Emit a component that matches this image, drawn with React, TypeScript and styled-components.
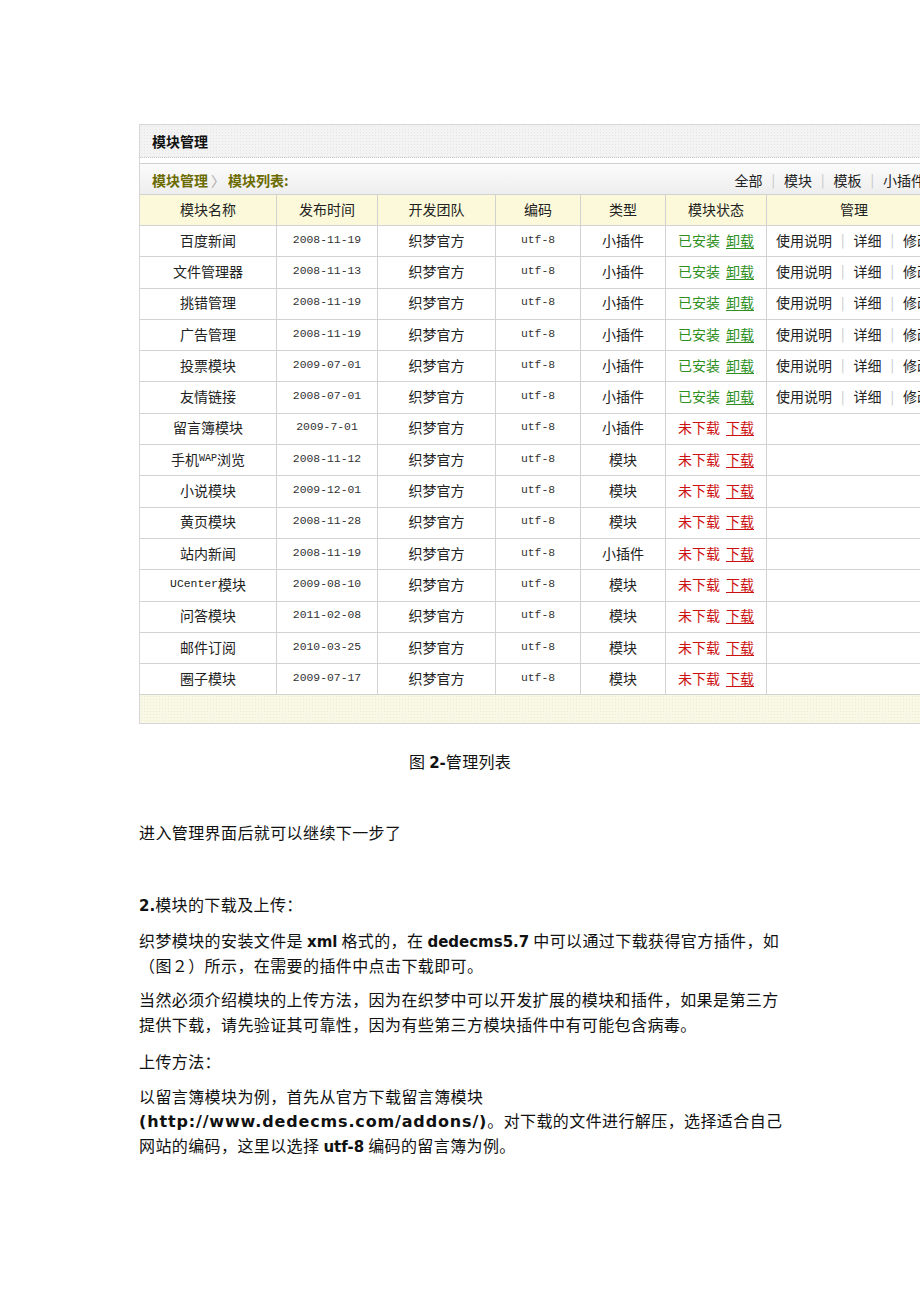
import styled, { createGlobalStyle } from 'styled-components';

const GlobalStyle = createGlobalStyle`
  html, body {
    margin: 0;
    padding: 0;
    background: #fff;
    overflow-x: hidden;
  }
  body {
    font-family: "Noto Sans CJK SC", "Noto Sans", sans-serif;
    color: #111;
  }
`;

const columns = '137px 101px 118px 85px 85px 101px 1fr';

const Page = styled.div`
  width: 920px;
  min-height: 1302px;
  padding-top: 124px;
  box-sizing: border-box;
  overflow: hidden;
`;

const Panel = styled.div`
  margin-left: 139px;
  width: 801px;
  border: 1px solid #d6d6d6;
  border-right: none;
  font-size: 14px;
  color: #222;
`;

const TitleBar = styled.div`
  height: 33px;
  display: flex;
  align-items: center;
  padding-left: 12px;
  box-sizing: border-box;
  font-weight: bold;
  color: #111;
  background-color: #f3f3f3;
  background-image: radial-gradient(#e4e4e4 0.6px, transparent 0.8px);
  background-size: 3px 3px;
  border-bottom: 1px dotted #c8c8c8;
`;

const ListBox = styled.div`
  margin-top: 5px;
  border-top: 1px solid #cfcfcf;
`;

const Crumbs = styled.div`
  height: 31px;
  box-sizing: border-box;
  border-bottom: 1px solid #d2d2d2;
  display: flex;
  align-items: center;
  justify-content: space-between;
  padding: 1px 16px 0 12px;
  background: linear-gradient(#fbfbfb, #eeeeee);
`;

const CrumbPath = styled.div`
  font-weight: bold;
  color: #6b6b00;
`;

const CrumbArrow = styled.span`
  color: #aaa;
  font-weight: normal;
  margin: 0 3px;
`;

const FilterLinks = styled.div`
  color: #222;
  display: flex;
  align-items: center;
`;

const Sep = styled.span`
  color: #c4c4c4;
  margin: 0 9px;
  font-size: 13px;
`;

const HeadRow = styled.div`
  display: grid;
  grid-template-columns: ${columns};
  height: 31px;
  box-sizing: border-box;
  border-bottom: 1px solid #d2d2d2;
  background: #fbf9d9;
`;

const HeadCell = styled.div`
  display: flex;
  align-items: center;
  justify-content: center;
  padding-bottom: 2px;
  border-right: 1px solid #d2d2d2;
  color: #222;
  &:last-child {
    border-right: none;
  }
`;

const DataRow = styled.div`
  display: grid;
  grid-template-columns: ${columns};
  height: 31.3px;
  box-sizing: border-box;
  border-bottom: 1px solid #d2d2d2;
  background: #fff;
`;

const Cell = styled.div`
  display: flex;
  align-items: center;
  justify-content: center;
  padding-bottom: 3px;
  border-right: 1px solid #d2d2d2;
  color: #222;
  white-space: nowrap;
`;

const ManageCell = styled(Cell)`
  justify-content: flex-start;
  padding-left: 9px;
  border-right: none;
`;

const Mono = styled.span`
  font-family: "Liberation Mono", "DejaVu Sans Mono", monospace;
  font-size: 11.4px;
  color: #333;
`;

const SmallLatin = styled.span`
  font-family: "Liberation Mono", monospace;
  font-size: 10px;
`;

const MonoLatin = styled.span`
  font-family: "Liberation Mono", monospace;
  font-size: 11.4px;
`;

const Status = styled.span<{ $ok: boolean }>`
  color: ${(p) => (p.$ok ? '#2f8f1f' : '#cc1111')};
  display: flex;
  gap: 6px;
`;

const StatusLink = styled.span`
  text-decoration: underline;
  text-underline-offset: 2px;
`;

const FootRow = styled.div`
  height: 28px;
  background-color: #f9f8e6;
  background-image: radial-gradient(#ecead0 0.6px, transparent 0.8px);
  background-size: 3px 3px;
`;

const Caption = styled.div`
  margin-top: 25px;
  text-align: center;
  font-size: 16px;
  line-height: 24px;
  color: #111;
  letter-spacing: 0.3px;
`;

const Bold = styled.b`
  font-family: "DejaVu Sans", "Noto Sans CJK SC", sans-serif;
  font-weight: bold;
  font-size: 15px;
  line-height: 1;
  letter-spacing: 0;
`;

const Url = styled(Bold)`
  font-size: 16px;
  letter-spacing: 0.85px;
`;

const Article = styled.div`
  margin-left: 139px;
  width: 652px;
  font-size: 16px;
  line-height: 24.5px;
  letter-spacing: 0.4px;
  color: #111;
`;

const Para = styled.p<{ $gap: number }>`
  margin: ${(p) => p.$gap}px 0 0;
`;

type Module = {
  name: React.ReactNode;
  date: string;
  kind: string;
  installed: boolean;
};

const modules: Module[] = [
  { name: '百度新闻', date: '2008-11-19', kind: '小插件', installed: true },
  { name: '文件管理器', date: '2008-11-13', kind: '小插件', installed: true },
  { name: '挑错管理', date: '2008-11-19', kind: '小插件', installed: true },
  { name: '广告管理', date: '2008-11-19', kind: '小插件', installed: true },
  { name: '投票模块', date: '2009-07-01', kind: '小插件', installed: true },
  { name: '友情链接', date: '2008-07-01', kind: '小插件', installed: true },
  { name: '留言簿模块', date: '2009-7-01', kind: '小插件', installed: false },
  { name: <>手机<SmallLatin>WAP</SmallLatin>浏览</>, date: '2008-11-12', kind: '模块', installed: false },
  { name: '小说模块', date: '2009-12-01', kind: '模块', installed: false },
  { name: '黄页模块', date: '2008-11-28', kind: '模块', installed: false },
  { name: '站内新闻', date: '2008-11-19', kind: '小插件', installed: false },
  { name: <><MonoLatin>UCenter</MonoLatin>模块</>, date: '2009-08-10', kind: '模块', installed: false },
  { name: '问答模块', date: '2011-02-08', kind: '模块', installed: false },
  { name: '邮件订阅', date: '2010-03-25', kind: '模块', installed: false },
  { name: '圈子模块', date: '2009-07-17', kind: '模块', installed: false },
];

export default function App() {
  return (
    <>
      <GlobalStyle />
      <Page>
        <Panel>
          <TitleBar>模块管理</TitleBar>
          <ListBox>
            <Crumbs>
              <CrumbPath>
                模块管理<CrumbArrow>〉</CrumbArrow>模块列表:
              </CrumbPath>
              <FilterLinks>
                <span>全部</span><Sep>|</Sep>
                <span>模块</span><Sep>|</Sep>
                <span>模板</span><Sep>|</Sep>
                <span>小插件</span>
              </FilterLinks>
            </Crumbs>
            <HeadRow>
              <HeadCell>模块名称</HeadCell>
              <HeadCell>发布时间</HeadCell>
              <HeadCell>开发团队</HeadCell>
              <HeadCell>编码</HeadCell>
              <HeadCell>类型</HeadCell>
              <HeadCell>模块状态</HeadCell>
              <HeadCell>管理</HeadCell>
            </HeadRow>
            {modules.map((m, i) => (
              <DataRow key={i}>
                <Cell>{m.name}</Cell>
                <Cell><Mono>{m.date}</Mono></Cell>
                <Cell>织梦官方</Cell>
                <Cell><Mono>utf-8</Mono></Cell>
                <Cell>{m.kind}</Cell>
                <Cell>
                  <Status $ok={m.installed}>
                    {m.installed ? '已安装' : '未下载'}
                    <StatusLink>{m.installed ? '卸载' : '下载'}</StatusLink>
                  </Status>
                </Cell>
                <ManageCell>
                  {m.installed && (
                    <>
                      <span>使用说明</span><Sep>|</Sep>
                      <span>详细</span><Sep>|</Sep>
                      <span>修改</span>
                    </>
                  )}
                </ManageCell>
              </DataRow>
            ))}
            <FootRow />
          </ListBox>
        </Panel>

        <Caption>图 <Bold>2-</Bold>管理列表</Caption>

        <Article>
          <Para $gap={47}>进入管理界面后就可以继续下一步了</Para>
          <Para $gap={47}><Bold>2.</Bold>模块的下载及上传：</Para>
          <Para $gap={12}>
            织梦模块的安装文件是 <Bold>xml</Bold> 格式的，在 <Bold>dedecms5.7</Bold> 中可以通过下载获得官方插件，如（图２）所示，在需要的插件中点击下载即可。
          </Para>
          <Para $gap={10}>
            当然必须介绍模块的上传方法，因为在织梦中可以开发扩展的模块和插件，如果是第三方提供下载，请先验证其可靠性，因为有些第三方模块插件中有可能包含病毒。
          </Para>
          <Para $gap={13}>上传方法：</Para>
          <Para $gap={10}>
            以留言簿模块为例，首先从官方下载留言簿模块<br />
            <Url>(http://www.dedecms.com/addons/)</Url>。对下载的文件进行解压，选择适合自己网站的编码，这里以选择 <Bold>utf-8</Bold> 编码的留言簿为例。
          </Para>
        </Article>
      </Page>
    </>
  );
}
